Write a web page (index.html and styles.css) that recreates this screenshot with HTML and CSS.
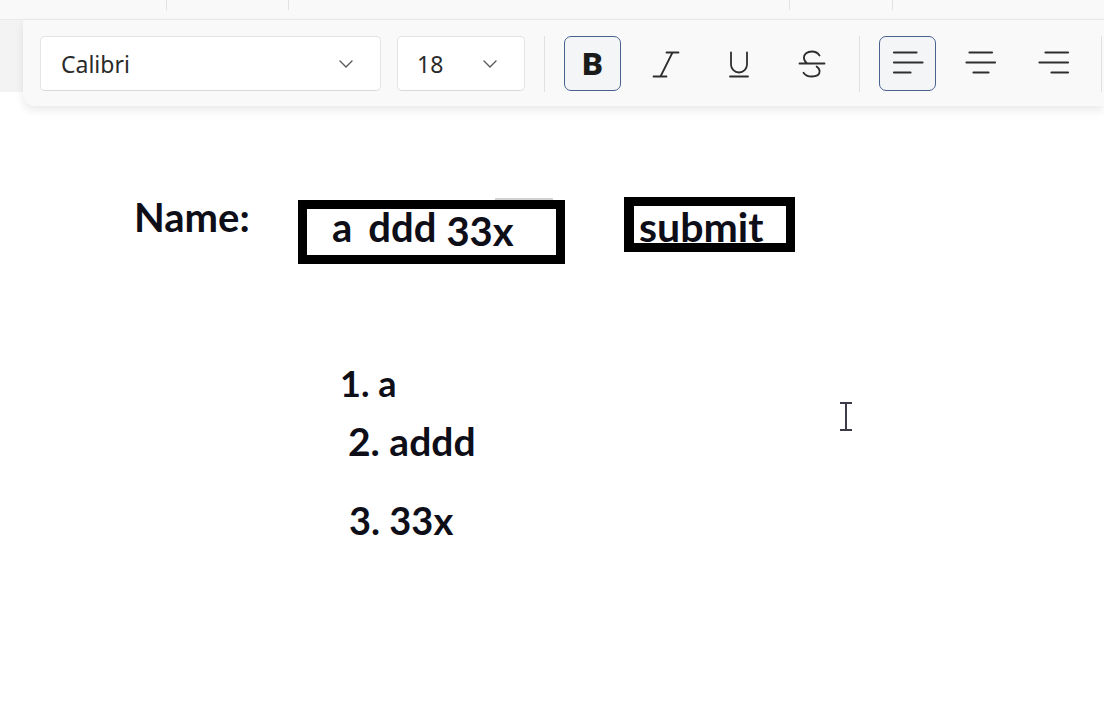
FILE: index.html
```html
<!DOCTYPE html>
<html lang="en">
<head>
<meta charset="utf-8">
<title>Editor</title>
<link rel="stylesheet" href="styles.css">
</head>
<body>
<div class="topstrip">
  <div class="cell c1"></div><div class="cell c2"></div><div class="cell c3"></div><div class="cell c4"></div><div class="cell c5"></div>
</div>
<div class="toolbar-row">
  <div class="toolbar">
    <div class="dropdown font-dd"><span>Calibri</span><svg class="chev" width="14" height="8" viewBox="0 0 14 8"><path d="M1 1l6 6 6-6"/></svg></div>
    <div class="dropdown size-dd"><span>18</span><svg class="chev" width="14" height="8" viewBox="0 0 14 8"><path d="M1 1l6 6 6-6"/></svg></div>
    <div class="sep"></div>
    <div class="btn active"><span class="bold-b">B</span></div>
    <div class="btn"><svg class="ico" width="36" height="36" viewBox="0 0 36 36"><path d="M18.5 6.5h12M5.5 30.5h13M24.5 6.5l-12 24"/></svg></div>
    <div class="btn"><svg class="ico" width="36" height="36" viewBox="0 0 36 36"><path d="M10 6.5v12a8 8 0 0 0 16 0v-12M9 30.5h18"/></svg></div>
    <div class="btn"><svg class="ico" width="36" height="36" viewBox="0 0 36 36"><path d="M25.5 9.5c-1.6-2.6-4.3-4-7.6-4-4.8 0-8 2.7-8 6.3 0 2.3 1.1 4 3.2 5.7M22.6 20.5c2 1.4 3 3 3 5 0 3.1-3.2 5-7.8 5-3.8 0-6.7-1.4-8.300-3.8M5.5 17.5h25"/></svg></div>
    <div class="sep"></div>
    <div class="btn active"><svg class="ico lines" width="36" height="36" viewBox="0 0 36 36"><path d="M4 6.5h22.5M4 16.5h28.5M4 26.5h16.5"/></svg></div>
    <div class="btn"><svg class="ico lines" width="36" height="36" viewBox="0 0 36 36"><path d="M6.5 6.5h22.5M3.5 16.5h28.5M10.5 26.5h15"/></svg></div>
    <div class="btn"><svg class="ico lines" width="36" height="36" viewBox="0 0 36 36"><path d="M9.5 6.5h22.5M3.5 16.5h28.5M15.5 26.5h16.5"/></svg></div>
    <div class="sep"></div>
  </div>
</div>
<main class="doc">
  <div class="form-row">
    <div class="label">Name:</div>
    <div class="input"><span>a</span><span class="ddd">ddd</span><span class="low">33x</span></div>
    <div class="submit">submit</div>
  </div>
  <ol class="list">
    <li class="i1">1. a</li>
    <li class="i2">2. addd</li>
    <li class="i3">3. 33x</li>
  </ol>
  <div class="cursor"></div>
</main>
</body>
</html>
```
FILE: styles.css
```css
html, body {
  margin: 0;
  padding: 0;
}
body {
  width: 1104px;
  height: 720px;
  overflow: hidden;
  background: #ffffff;
  font-family: "Noto Sans", "Open Sans", sans-serif;
}

/* top strip */
.topstrip {
  display: flex;
  height: 19px;
  background: #f9f9f9;
  border-bottom: 1px solid #ebebeb;
}
.cell {
  flex: none;
  height: 10px;
  box-sizing: border-box;
  border-right: 1px solid #e2e2e2;
}
.c1 { width: 167px; }
.c2 { width: 122px; }
.c3 { width: 501px; }
.c4 { width: 103px; }
.c5 { flex: 1; border-right: none; }

/* toolbar */
.toolbar-row {
  display: flex;
  height: 87px;
  background: linear-gradient(#f3f3f3 0, #f3f3f3 72px, #ffffff 72px);
}
.toolbar {
  position: relative;
  z-index: 1;
  flex: 1;
  min-width: 0;
  margin-left: 23px;
  height: 86px;
  box-sizing: border-box;
  padding: 16px 0 0 17px;
  overflow: hidden;
  background: #f9f9f9;
  border-radius: 0 0 0 12px;
  box-shadow: 0 4px 10px rgba(0, 0, 0, 0.09);
  display: flex;
  align-items: flex-start;
  gap: 16px;
}
.dropdown {
  flex: none;
  height: 55px;
  box-sizing: border-box;
  background: #ffffff;
  border: 1px solid #e4e4e4;
  border-bottom-color: #d8d8d8;
  border-radius: 5px;
  display: flex;
  align-items: center;
  justify-content: space-between;
  padding: 0 27px 0 20px;
  font-size: 23px;
  color: #2b2b2b;
}
.font-dd { width: 341px; }
.size-dd { width: 128px; padding-left: 19px; }
.chev {
  fill: none;
  stroke: #5a5a5a;
  stroke-width: 1.4;
  stroke-linecap: round;
  stroke-linejoin: round;
}
.sep {
  flex: none;
  width: 1px;
  height: 56px;
  margin: 0 3px;
  background: #e1e1e1;
}
.btn {
  flex: none;
  width: 57px;
  height: 55px;
  box-sizing: border-box;
  border: 1.5px solid transparent;
  border-radius: 7px;
  display: flex;
  align-items: center;
  justify-content: center;
}
.btn.active {
  border-color: #4a6190;
  background: #f4f5f7;
}
.bold-b {
  font-family: Roboto, "Noto Sans", sans-serif;
  font-weight: 900;
  font-size: 32px;
  line-height: 1;
  color: #1b1b1b;
}
.ico {
  fill: none;
  stroke: #2e2e2e;
  stroke-width: 1.8;
  stroke-linecap: round;
  stroke-linejoin: round;
}
.ico.lines {
  stroke-width: 2.2;
}

/* document */
.doc {
  position: relative;
  padding-top: 90px;
  font-family: Lato, "Liberation Sans", sans-serif;
  font-weight: 700;
  color: #0e0e18;
}
.form-row {
  display: flex;
  align-items: flex-start;
  padding-left: 134px;
}
.label {
  flex: none;
  width: 164px;
  font-size: 40px;
  line-height: 40px;
}
.input {
  position: relative;
  flex: none;
  width: 267px;
  height: 64px;
  margin-top: 3px;
  box-sizing: border-box;
  border: 9px solid #000;
  padding-left: 25px;
  font-size: 40px;
  line-height: 36px;
  white-space: nowrap;
}
.input::before {
  content: "";
  position: absolute;
  left: 188px;
  top: -11px;
  width: 58px;
  height: 2px;
  background: #d2d2d2;
}
.ddd { margin-left: 16px; }
.low { margin-left: 10px; vertical-align: -4px; }
.submit {
  flex: none;
  width: 171px;
  height: 55px;
  margin-left: 59px;
  box-sizing: border-box;
  border: 9px solid #000;
  border-left-width: 10px;
  padding: 3px 0 0 5px;
  font-size: 41px;
  line-height: 36px;
  white-space: nowrap;
}
.list {
  list-style: none;
  margin: 101px 0 0;
  padding: 0;
}
.i1 {
  margin-left: 340px;
  font-size: 36px;
  line-height: 36px;
}
.i2 {
  margin: 21px 0 0 348px;
  font-size: 39px;
  line-height: 38px;
}
.i3 {
  margin: 41px 0 0 349px;
  font-size: 38px;
  line-height: 38px;
}
.cursor {
  position: absolute;
  left: 845px;
  top: 295px;
  width: 2px;
  height: 29px;
  background: #3c3c48;
}
.cursor::before,
.cursor::after {
  content: "";
  position: absolute;
  left: -5px;
  width: 12px;
  height: 2px;
  background: #3c3c48;
}
.cursor::before { top: 0; }
.cursor::after { bottom: 0; }
```
